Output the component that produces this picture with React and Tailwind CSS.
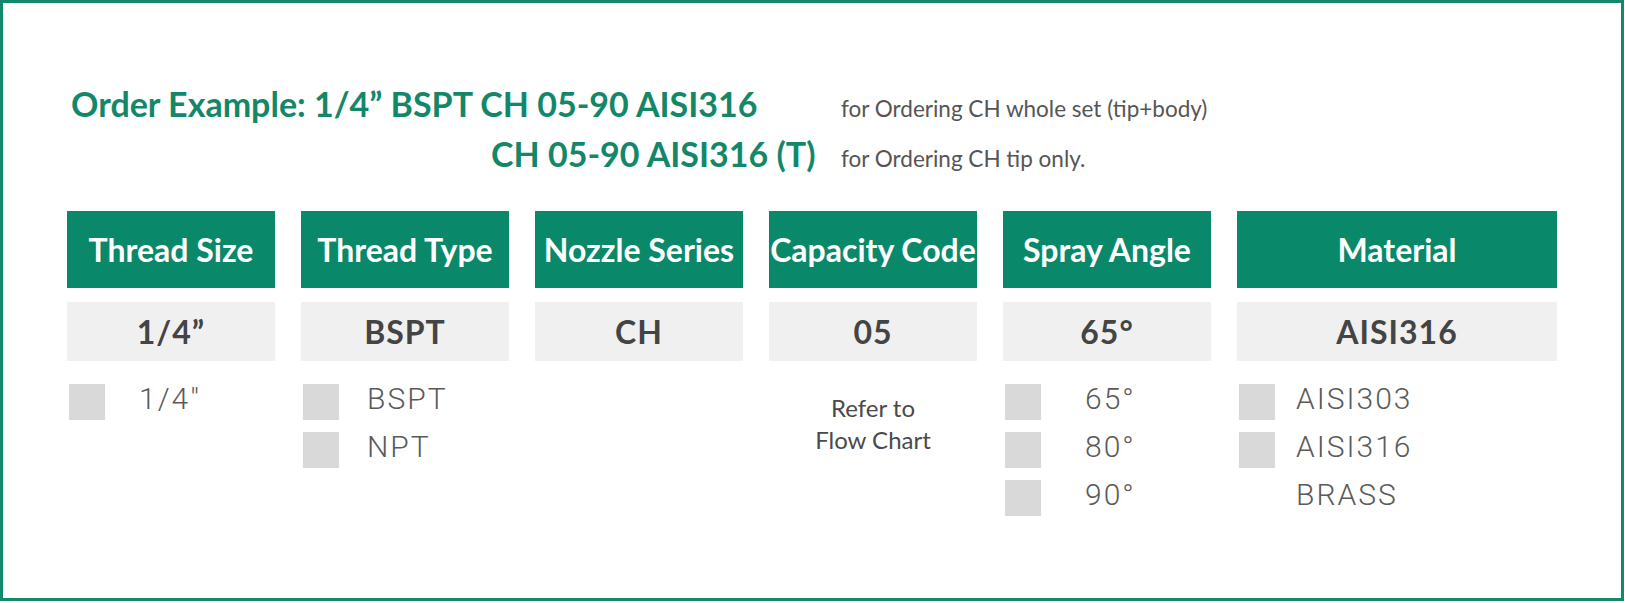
const columns = [
  {
    title: 'Thread Size',
    value: '1/4”',
    width: 'w-[208px]',
    gap: 'ml-[34px]',
    options: [{ label: '1/4″', box: true }],
  },
  {
    title: 'Thread Type',
    value: 'BSPT',
    width: 'w-[208px]',
    gap: 'ml-[28px]',
    options: [
      { label: 'BSPT', box: true },
      { label: 'NPT', box: true },
    ],
  },
  {
    title: 'Nozzle Series',
    value: 'CH',
    width: 'w-[208px]',
    options: [],
  },
  {
    title: 'Capacity Code',
    value: '05',
    width: 'w-[208px]',
    note: ['Refer to', 'Flow Chart'],
  },
  {
    title: 'Spray Angle',
    value: '65°',
    width: 'w-[208px]',
    gap: 'ml-[44px]',
    options: [
      { label: '65°', box: true },
      { label: '80°', box: true },
      { label: '90°', box: true },
    ],
  },
  {
    title: 'Material',
    value: 'AISI316',
    width: 'w-[320px]',
    gap: 'ml-[21px]',
    options: [
      { label: 'AISI303', box: true },
      { label: 'AISI316', box: true },
      { label: 'BRASS', box: false },
    ],
  },
]

function Column({ col }) {
  return (
    <div className={`${col.width} flex flex-col`}>
      <div className="flex h-[77px] items-center justify-center bg-[#0a896a] text-[32px] font-bold text-white">
        {col.title}
      </div>
      <div className="mt-[14px] flex h-[59px] items-center justify-center bg-[#f0f0f0] text-[32px] font-bold tracking-[1px] text-[#444444]">
        {col.value}
      </div>
      {col.note ? (
        <div className="mt-[31px] text-center text-[24px] leading-[32px] text-[#4a4a4a]">
          {col.note.map((line) => (
            <div key={line}>{line}</div>
          ))}
        </div>
      ) : (
        <div className="mt-[23px] flex flex-col gap-[12px] pl-[2px]">
          {col.options.map((opt) => (
            <div key={opt.label} className="flex h-[36px] items-center">
              <div className={`h-[36px] w-[36px] ${opt.box ? 'bg-[#d9d9d9]' : ''}`} />
              <span
                className={`${col.gap} pb-[6px] font-['Roboto',sans-serif] text-[30px] font-light leading-none tracking-[2px] text-[#5a5a5a]`}
              >
                {opt.label}
              </span>
            </div>
          ))}
        </div>
      )}
    </div>
  )
}

function App() {
  return (
    <div className="bg-white font-['Lato','Open_Sans',sans-serif]">
      <div className="h-[601px] w-[1624px] border-[3px] border-[#13896b] pl-[64px] pt-[76px]">
        <div className="flex h-[50px] items-baseline">
          <div className="w-[774px] pl-[4px] text-[34px] font-bold leading-[50px] text-[#148769]">
            Order Example: 1/4” BSPT CH 05-90 AISI316
          </div>
          <div className="text-[22.5px] leading-[50px] text-[#555555]">
            for Ordering CH whole set (tip+body)
          </div>
        </div>
        <div className="flex h-[50px] items-baseline">
          <div className="w-[774px] pl-[424px] text-[34px] font-bold leading-[50px] text-[#148769]">
            CH 05-90 AISI316 (T)
          </div>
          <div className="text-[22.5px] leading-[50px] text-[#555555]">
            for Ordering CH tip only.
          </div>
        </div>

        <div className="mt-[32px] flex gap-[26px]">
          {columns.map((col) => (
            <Column key={col.title} col={col} />
          ))}
        </div>
      </div>
    </div>
  )
}

export default App
